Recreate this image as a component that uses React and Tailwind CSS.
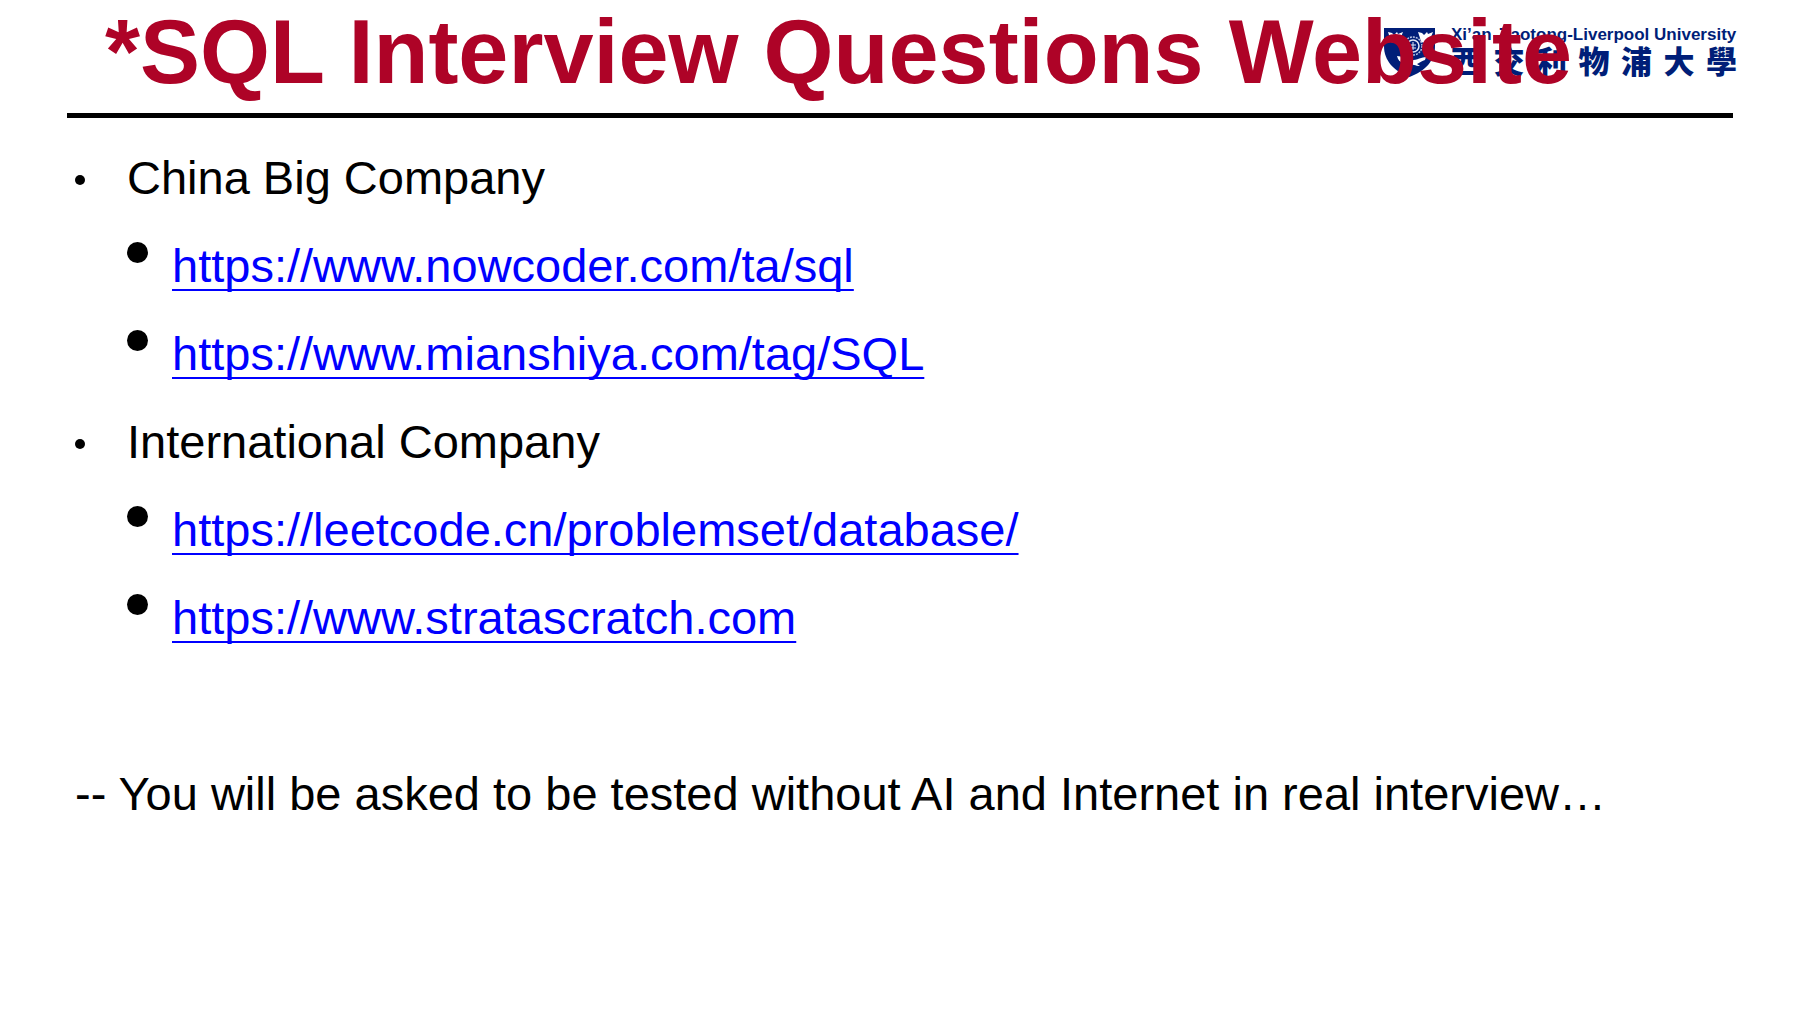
const sections = [
  {
    title: "China Big Company",
    links: ["https://www.nowcoder.com/ta/sql", "https://www.mianshiya.com/tag/SQL"],
  },
  {
    title: "International Company",
    links: ["https://leetcode.cn/problemset/database/", "https://www.stratascratch.com"],
  },
];

function Shield() {
  return (
    <svg viewBox="0 0 51 50" className="h-[50px] w-[51px] shrink-0" aria-hidden="true">
      <path d="M0 0H51V18C51 33 41 43 25.500 49C10 43 0 33 0 18Z" fill="#001e78" />
      <path
        d="M4 4l4 1 2 2 3-3 1 2 5-2-2 5-4 2-2 4-4-1-1-4zM34 4l4 1 2 2 3-3 1 2 5-2-2 5-4 2-2 4-4-1-1-4z"
        fill="#fff"
      />
      <circle cx="29" cy="18" r="9" fill="none" stroke="#b8c4e2" strokeWidth="1.500" strokeDasharray="2 1" />
      <circle cx="29" cy="18" r="6" fill="none" stroke="#e4e9f5" strokeWidth="1.500" />
      <path d="M26 17h6M26 20h6M29 14v8" stroke="#e4e9f5" strokeWidth="1" />
      <path
        d="M13 28c5 0 8 3 13 4s12-3 16-3l-1 3c-4 1-5 3-8 4l3 2c-5 0-7-2-11-2s-4 2-8 2l2-3c-3-1-5-3-6-7z"
        fill="#fff"
      />
    </svg>
  );
}

function UniversityLogo() {
  return (
    <div className="absolute top-7 -right-1 flex items-start gap-4 text-[#001e78]">
      <Shield />
      <div className="flex w-[286px] flex-col">
        <span className="text-[17px] leading-[14px] font-bold whitespace-nowrap">
          Xi’an Jiaotong-Liverpool University
        </span>
        <span
          lang="zh-Hant"
          className="font-['Noto_Sans_CJK_TC',sans-serif] text-[31px] leading-[36px] font-black [text-align-last:justify]"
        >
          西交利物浦大學
        </span>
      </div>
    </div>
  );
}

export default function App() {
  return (
    <div className="min-h-screen bg-white px-[67px] font-['Liberation_Sans',Arial,sans-serif] text-black">
      <header className="relative border-b-[5px] border-black pb-[9px] pl-[38px]">
        <UniversityLogo />
        <h1 className="relative text-[90px] leading-[104px] font-bold whitespace-nowrap text-[#ae0327]">
          *SQL Interview Questions Website
        </h1>
      </header>

      <main className="px-2 pt-4 text-[47px] leading-[88px]">
        <ul>
          {sections.map((section) => (
            <li key={section.title}>
              <div className="flex items-center gap-[42px]">
                <span className="mt-1 size-[10px] shrink-0 rounded-full bg-black" />
                <span>{section.title}</span>
              </div>
              <ul className="pl-[52px]">
                {section.links.map((href) => (
                  <li key={href} className="flex items-start gap-6">
                    <span className="mt-5 size-[21px] shrink-0 rounded-full bg-black" />
                    <a
                      href={href}
                      className="text-[#0000ff] underline decoration-2 underline-offset-[7px] [text-decoration-skip-ink:none]"
                    >
                      {href}
                    </a>
                  </li>
                ))}
              </ul>
            </li>
          ))}
        </ul>
        <p className="pt-[88px]">
          -- You will be asked to be tested without AI and Internet in real interview…
        </p>
      </main>
    </div>
  );
}
